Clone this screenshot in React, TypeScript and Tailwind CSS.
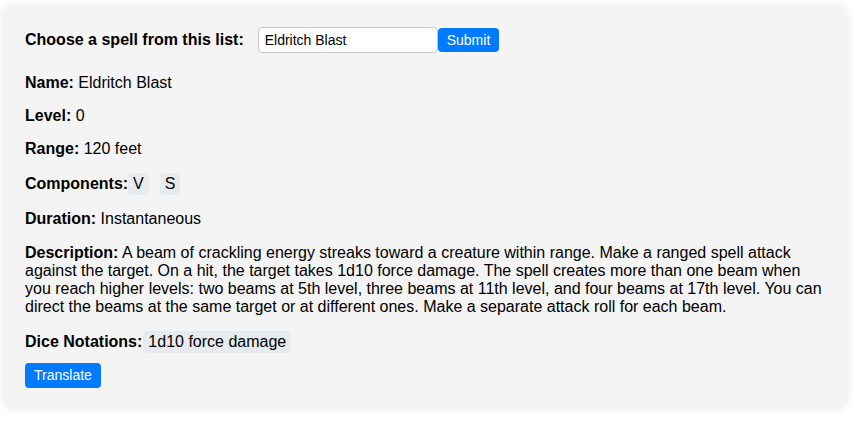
import { useState } from "react";

export default function App() {
  const [spell, setSpell] = useState("Eldritch Blast");

  const components = ["V", "S"];

  return (
    <div className="bg-white min-h-screen pt-[6px] pl-[3px] font-['Liberation_Sans',Arial,sans-serif] text-black">
      <div className="w-[844px] bg-[#f4f4f4] rounded-[10px] shadow-[0_0_10px_rgba(0,0,0,0.1)] px-[22px] pt-[20px] pb-[20px]">
        {/* Spell picker */}
        <div className="flex items-center h-[28px] mb-[20px]">
          <label className="font-bold text-[16px] mr-[14px]">Choose a spell from this list:</label>
          <input
            value={spell}
            onChange={(e) => setSpell(e.target.value)}
            className="w-[180px] h-[26px] bg-white border border-[#ccc] rounded-[4px] px-[6px] text-[14px] outline-none"
          />
          <button className="h-[24px] bg-[#007bff] text-white text-[14px] px-[9px] rounded-[4px]">
            Submit
          </button>
        </div>

        <p className="text-[16px] leading-[18px] mb-[15px]">
          <strong>Name:</strong> Eldritch Blast
        </p>
        <p className="text-[16px] leading-[18px] mb-[15px]">
          <strong>Level:</strong> 0
        </p>
        <p className="text-[16px] leading-[18px] mb-[15px]">
          <strong>Range:</strong> 120 feet
        </p>
        <p className="text-[16px] leading-[18px] mb-[15px]">
          <strong>Components:</strong>
          {components.map((c) => (
            <span key={c} className="inline-block bg-[#e8ebee] rounded-[4px] px-[5px] py-[2px] mr-[11px]">
              {c}
            </span>
          ))}
        </p>
        <p className="text-[16px] leading-[18px] mb-[16px]">
          <strong>Duration:</strong> Instantaneous
        </p>
        <p className="text-[16px] leading-[18px] mb-[15px] pr-[2px]">
          <strong>Description:</strong> A beam of crackling energy streaks toward a creature within range. Make a
          ranged spell attack against the target. On a hit, the target takes 1d10 force damage. The spell creates
          more than one beam when you reach higher levels: two beams at 5th level, three beams at 11th level, and
          four beams at 17th level. You can direct the beams at the same target or at different ones. Make a
          separate attack roll for each beam.
        </p>
        <p className="text-[16px] leading-[18px] mb-[10px]">
          <strong>Dice Notations:</strong>
          <span className="inline-block bg-[#e8ebee] rounded-[4px] px-[5px] py-[2px] ml-[1px]">1d10 force damage</span>
        </p>
        <button className="h-[25px] bg-[#007bff] text-white text-[14px] px-[9px] rounded-[4px]">Translate</button>
      </div>
    </div>
  );
}
